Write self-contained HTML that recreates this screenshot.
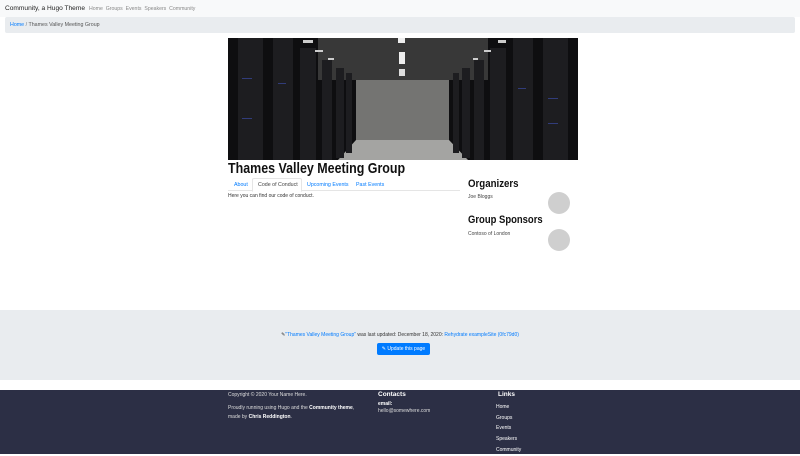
<!DOCTYPE html>
<html><head><meta charset="utf-8"><style>
*{margin:0;padding:0;box-sizing:border-box}
body{width:800px;height:454px;overflow:hidden;font-family:"Liberation Sans",sans-serif;background:#fff;position:relative;color:#212529}
.abs{position:absolute}
a{color:#007bff;text-decoration:none}
.sx{transform-origin:left top;white-space:nowrap}
</style></head><body>
<div class="abs" style="left:0;top:0;width:800px;height:17px;background:#f8f9fa"></div>
<div class="abs" style="left:5px;top:5px;font-size:6.6px;color:#222">Community, a Hugo Theme</div>
<div class="abs" style="left:89px;top:5.5px;font-size:5.2px;color:#888">Home&nbsp; Groups&nbsp; Events&nbsp; Speakers&nbsp; Community</div>
<div class="abs" style="left:5px;top:17px;width:790px;height:16px;background:#e9ecef;border-radius:2px"></div>
<div class="abs" style="left:10px;top:22px;font-size:5.3px;color:#6c757d"><a>Home</a> / <span style="color:#555">Thames Valley Meeting Group</span></div>

<svg class="abs" style="left:228px;top:38px" width="350" height="122" viewBox="0 0 350 122">
<rect width="350" height="122" fill="#0e0e10"/>
<rect x="90" y="0" width="170" height="42" fill="#383838"/>
<rect x="128" y="42" width="93" height="62" fill="#747472"/>
<polygon points="110,122 240,122 221,102 128,102" fill="#a4a4a2"/>
<rect x="170" y="0" width="7" height="5" fill="#eee"/><rect x="171" y="14" width="6" height="12" fill="#eee"/><rect x="171" y="31" width="6" height="7" fill="#ddd"/>
<g fill="#1d1d20">
<rect x="10" y="0" width="25" height="122"/><rect x="45" y="0" width="20" height="122"/><rect x="72" y="10" width="16" height="112"/><rect x="94" y="22" width="10" height="100"/><rect x="108" y="30" width="8" height="90"/><rect x="118" y="35" width="6" height="80"/>
<rect x="225" y="35" width="6" height="80"/><rect x="234" y="30" width="8" height="90"/><rect x="246" y="22" width="10" height="100"/><rect x="262" y="10" width="16" height="112"/><rect x="285" y="0" width="20" height="122"/><rect x="315" y="0" width="25" height="122"/>
</g>
<g fill="#ccc"><rect x="75" y="2" width="10" height="3"/><rect x="87" y="12" width="8" height="2"/><rect x="100" y="20" width="6" height="2"/><rect x="270" y="2" width="8" height="3"/><rect x="256" y="12" width="7" height="2"/><rect x="245" y="20" width="5" height="2"/></g>
<g fill="#3a4aa0" opacity=".7"><rect x="14" y="40" width="10" height="1"/><rect x="50" y="45" width="8" height="1"/><rect x="290" y="50" width="8" height="1"/><rect x="320" y="60" width="10" height="1"/><rect x="14" y="80" width="10" height="1"/><rect x="320" y="85" width="10" height="1"/></g>
</svg>

<div class="abs sx" style="left:228px;top:160px;font-size:15px;font-weight:bold;color:#111;transform:scaleX(0.83)">Thames Valley Meeting Group</div>
<div class="abs" style="left:228px;top:179px;width:232px;height:12px;border-bottom:1px solid #e5e5e5"></div>
<div class="abs" style="left:234px;top:182px;font-size:5.3px;color:#007bff">About</div>
<div class="abs" style="left:252px;top:178px;width:50px;height:14px;border:1px solid #e5e5e5;border-bottom-color:#fff;border-radius:2px 2px 0 0;background:#fff"></div>
<div class="abs" style="left:258px;top:182px;font-size:5.3px;color:#444">Code of Conduct</div>
<div class="abs" style="left:307px;top:182px;font-size:5.3px;color:#007bff">Upcoming Events</div>
<div class="abs" style="left:356px;top:182px;font-size:5.3px;color:#007bff">Past Events</div>
<div class="abs" style="left:228px;top:193px;font-size:5px;color:#333">Here you can find our code of conduct.</div>

<div class="abs sx" style="left:468px;top:178px;font-size:11px;font-weight:bold;color:#111;transform:scaleX(0.88)">Organizers</div>
<div class="abs" style="left:468px;top:194px;font-size:5px;color:#444">Joe Bloggs</div>
<div class="abs" style="left:548px;top:192px;width:22px;height:22px;border-radius:50%;background:#cfcfcf"></div>
<div class="abs sx" style="left:468px;top:214px;font-size:11px;font-weight:bold;color:#111;transform:scaleX(0.86)">Group Sponsors</div>
<div class="abs" style="left:468px;top:231px;font-size:5px;color:#444">Contoso of London</div>
<div class="abs" style="left:548px;top:229px;width:22px;height:22px;border-radius:50%;background:#cfcfcf"></div>

<div class="abs" style="left:0;top:310px;width:800px;height:70px;background:#e9ecef"></div>
<div class="abs" style="left:0;top:332px;width:800px;text-align:center;font-size:5px;color:#333">✎<a>"Thames Valley Meeting Group"</a> was last updated: December 18, 2020: <a>Rehydrate exampleSite (0fc79d0)</a></div>
<div class="abs" style="left:377px;top:343px;width:53px;height:12px;background:#007bff;border-radius:2px;color:#fff;font-size:5px;line-height:12px;text-align:center">✎ Update this page</div>

<div class="abs" style="left:0;top:390px;width:800px;height:64px;background:#2c2f45"></div>
<div class="abs" style="left:228px;top:392px;font-size:5px;color:#ddd">Copyright © 2020 Your Name Here.</div>
<div class="abs" style="left:228px;top:404px;font-size:5px;color:#ddd;line-height:9px">Proudly running using Hugo and the <b style="color:#fff">Community theme</b>,<br>made by <b style="color:#fff">Chris Reddington</b>.</div>
<div class="abs" style="left:378px;top:391px;font-size:6.5px;color:#fff;font-weight:bold">Contacts</div>
<div class="abs" style="left:378px;top:401px;font-size:5px;color:#fff;font-weight:bold">email:</div>
<div class="abs" style="left:378px;top:408px;font-size:5px;color:#ddd">hello@somewhere.com</div>
<div class="abs" style="left:498px;top:391px;font-size:6.5px;color:#fff;font-weight:bold">Links</div>
<div class="abs" style="left:496px;top:402px;font-size:5px;color:#fff;line-height:10.7px">Home<br>Groups<br>Events<br>Speakers<br>Community</div>
</body></html>
